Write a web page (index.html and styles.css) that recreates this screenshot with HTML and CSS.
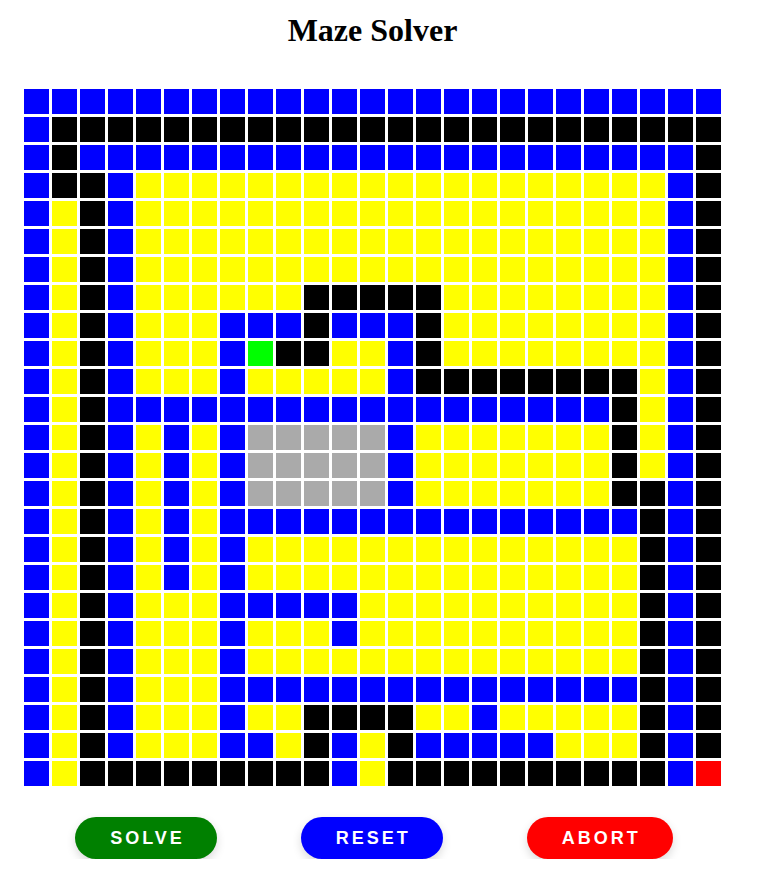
FILE: index.html
```html
<!DOCTYPE html>
<html lang="en">
<head>
  <meta charset="UTF-8">
  <meta name="viewport" content="width=device-width, initial-scale=1.0">
  <title>Maze Solver</title>
  <link rel="stylesheet" href="styles.css">
</head>
<body>
  <div class="app">
    <h1>Maze Solver</h1>

    <div class="maze" id="maze"></div>

    <div class="controls">
      <button class="btn btn-solve" id="solve">Solve</button>
      <button class="btn btn-reset" id="reset">Reset</button>
      <button class="btn btn-abort" id="abort">Abort</button>
    </div>
  </div>

  <script>
    // K = wall, B = open, Y = visited, A = blocked, G = start, R = end
    const rows = [
      'BBBBBBBBBBBBBBBBBBBBBBBBB',
      'BKKKKKKKKKKKKKKKKKKKKKKKK',
      'BKBBBBBBBBBBBBBBBBBBBBBBK',
      'BKKBYYYYYYYYYYYYYYYYYYYBK',
      'BYKBYYYYYYYYYYYYYYYYYYYBK',
      'BYKBYYYYYYYYYYYYYYYYYYYBK',
      'BYKBYYYYYYYYYYYYYYYYYYYBK',
      'BYKBYYYYYYKKKKKYYYYYYYYBK',
      'BYKBYYYBBBKBBBKYYYYYYYYBK',
      'BYKBYYYBGKKYYBKYYYYYYYYBK',
      'BYKBYYYBYYYYYBKKKKKKKKYBK',
      'BYKBBBBBBBBBBBBBBBBBBKYBK',
      'BYKBYBYBAAAAABYYYYYYYKYBK',
      'BYKBYBYBAAAAABYYYYYYYKYBK',
      'BYKBYBYBAAAAABYYYYYYYKKBK',
      'BYKBYBYBBBBBBBBBBBBBBBKBK',
      'BYKBYBYBYYYYYYYYYYYYYYKBK',
      'BYKBYBYBYYYYYYYYYYYYYYKBK',
      'BYKBYYYBBBBBYYYYYYYYYYKBK',
      'BYKBYYYBYYYBYYYYYYYYYYKBK',
      'BYKBYYYBYYYYYYYYYYYYYYKBK',
      'BYKBYYYBBBBBBBBBBBBBBBKBK',
      'BYKBYYYBYYKKKKYYBYYYYYKBK',
      'BYKBYYYBBYKBYKBBBBBYYYKBK',
      'BYKKKKKKKKKBYKKKKKKKKKKBR'
    ];

    const types = {
      K: 'wall',
      B: 'open',
      Y: 'visited',
      A: 'blocked',
      G: 'start',
      R: 'end'
    };

    function drawMaze() {
      const maze = document.getElementById('maze');
      maze.innerHTML = '';
      rows.forEach(row => {
        row.split('').forEach(ch => {
          const cell = document.createElement('div');
          cell.className = 'cell ' + types[ch];
          maze.appendChild(cell);
        });
      });
    }

    drawMaze();
  </script>
</body>
</html>
```

FILE: styles.css
```css
body {
  margin: 0;
  background: #fff;
}
.app {
  width: 745px;
  text-align: center;
}
h1 {
  font-family: "Liberation Serif", "Times New Roman", serif;
  font-size: 32px;
  font-weight: bold;
  margin: 12px 0 40px;
  line-height: 37px;
}
.maze {
  display: inline-grid;
  grid-template-columns: repeat(25, 25px);
  grid-auto-rows: 25px;
  gap: 3px;
  vertical-align: top;
}
.cell.wall {
  background: #000;
}
.cell.open {
  background: #0000ff;
}
.cell.visited {
  background: #ffff00;
}
.cell.blocked {
  background: #aaaaaa;
}
.cell.start {
  background: #00ff00;
}
.cell.end {
  background: #ff0000;
}
.controls {
  display: flex;
  justify-content: center;
  gap: 84px;
  margin-top: 31px;
  padding-left: 3px;
}
.btn {
  font-family: "Liberation Sans", Arial, sans-serif;
  font-size: 18px;
  font-weight: bold;
  line-height: 18px;
  letter-spacing: 3px;
  text-transform: uppercase;
  color: #fff;
  border: none;
  border-radius: 21px;
  padding: 12px 32px 12px 35px;
  box-shadow: 0 4px 10px rgba(0, 0, 0, 0.15);
  cursor: pointer;
}
.btn-solve {
  background: #008000;
}
.btn-reset {
  background: #0000ff;
}
.btn-abort {
  background: #ff0000;
}
```
